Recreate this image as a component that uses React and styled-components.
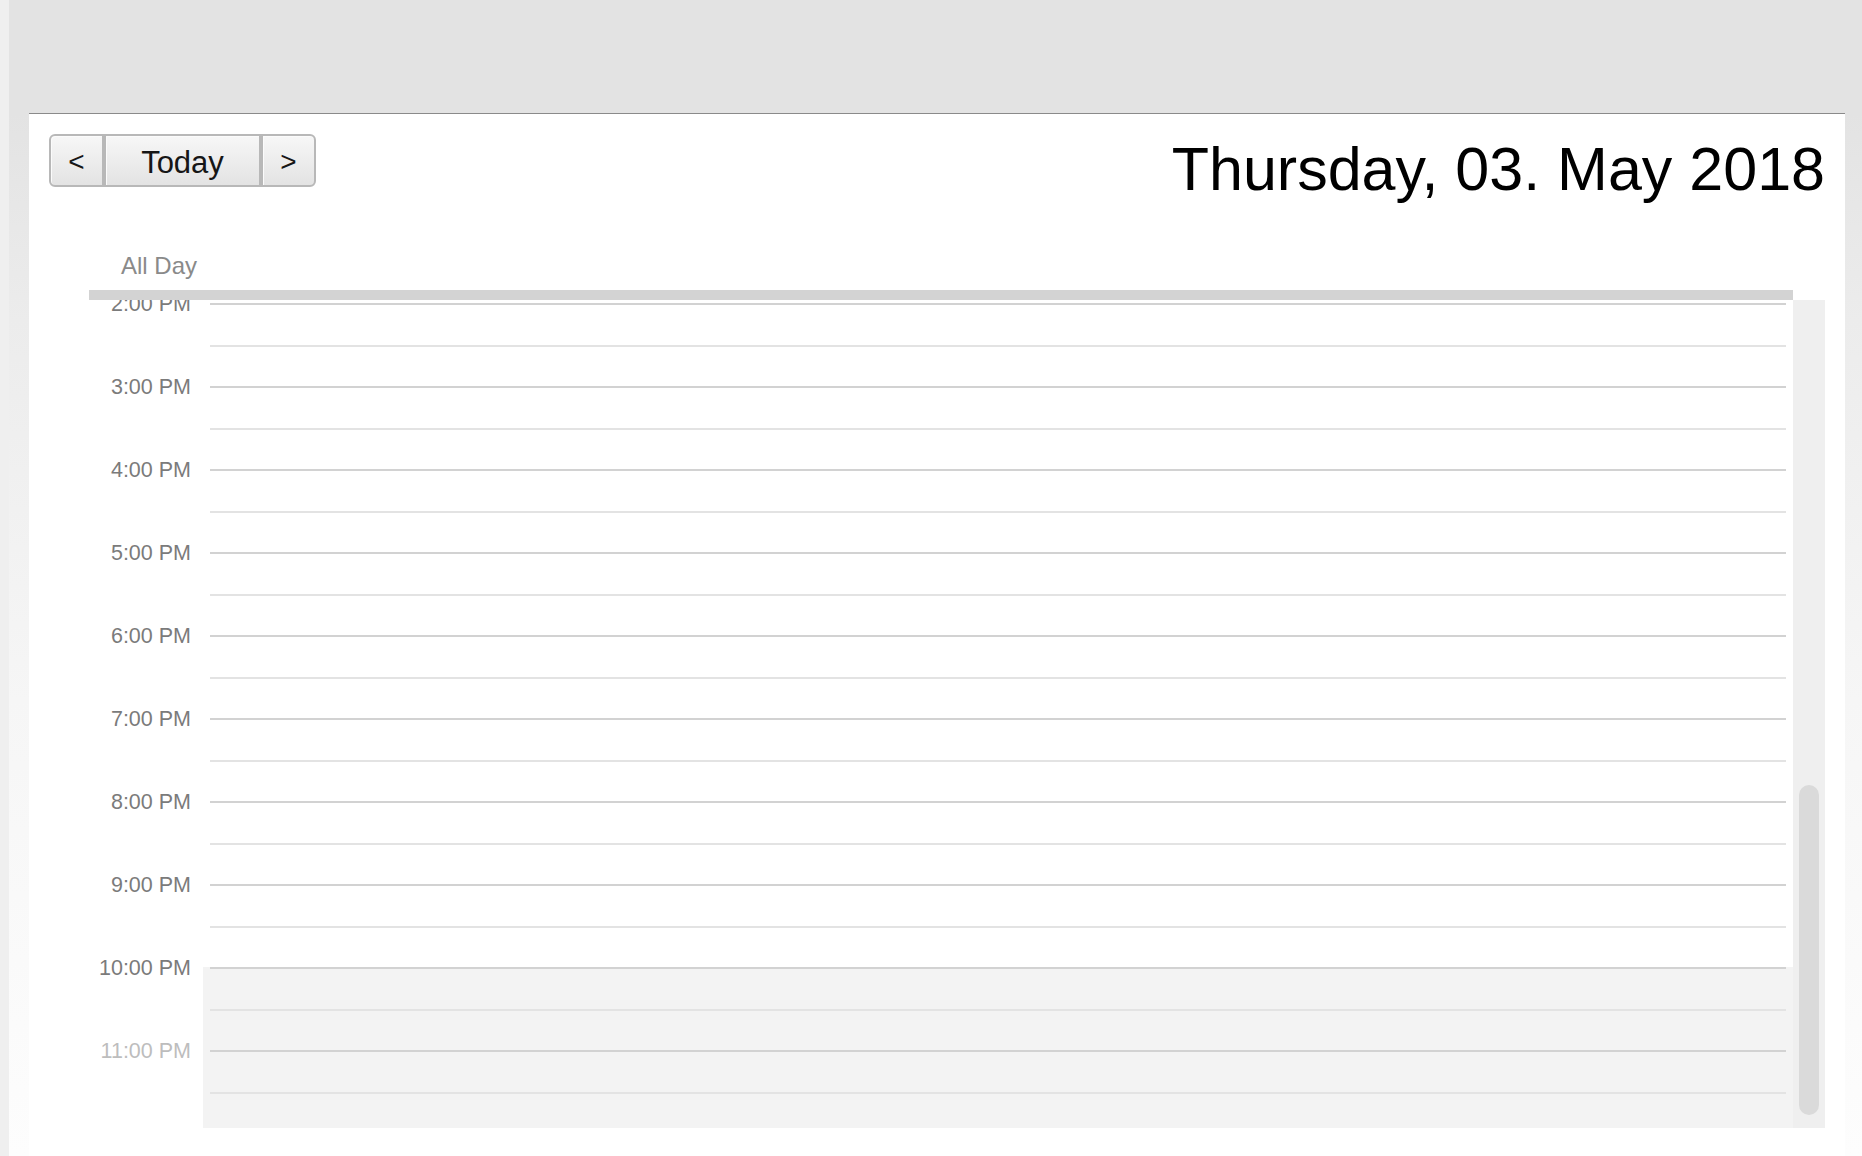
import React, { useLayoutEffect, useRef } from "react";
import styled, { createGlobalStyle } from "styled-components";

const HOUR = 83;
const VIEW_H = 828;
const SCROLL_TOP = 1159;
const THUMB_H = 330;

const Global = createGlobalStyle`
  *, *::before, *::after { box-sizing: border-box; }
  html, body { margin: 0; padding: 0; }
  body {
    font-family: "Liberation Sans", Arial, sans-serif;
    background: #efefef;
    overflow: hidden;
  }
`;

const Screen = styled.div`
  display: flex;
  width: 1862px;
  height: 1156px;
  overflow: hidden;
`;

const LeftStrip = styled.div`
  width: 9px;
  flex: none;
  background: #efefef;
`;

const Stage = styled.div`
  flex: 1;
  padding: 113px 17px 0 20px;
  background: linear-gradient(
    to bottom,
    #e3e3e3 0px,
    #e3e3e3 113px,
    #ececec 320px,
    #f6f6f6 700px,
    #fdfdfd 100%
  );
`;

const Panel = styled.div`
  background: #ffffff;
  border-top: 1px solid #8a8a8a;
  height: 1100px;
  display: flex;
  flex-direction: column;
`;

const Header = styled.div`
  display: flex;
  justify-content: space-between;
  align-items: flex-start;
  height: 73px;
  padding: 20px 20px 0 20px;
`;

const ButtonGroup = styled.div`
  display: flex;
  height: 53px;
`;

const NavButton = styled.button`
  width: ${(p) => p.$w}px;
  height: 53px;
  margin: 0;
  padding: 3px 0 0;
  font-family: "Liberation Sans", Arial, sans-serif;
  font-size: ${(p) => p.$fs}px;
  line-height: 1;
  color: #161616;
  background: linear-gradient(to bottom, #f7f7f7 0%, #ececec 55%, #e3e3e3 100%);
  border: 2px solid #b8b8b8;
  box-shadow: inset 1px 1px 0 #fbfbfb;
  border-radius: ${(p) =>
    p.$pos === "first" ? "6px 0 0 6px" : p.$pos === "last" ? "0 6px 6px 0" : "0"};
  display: flex;
  align-items: center;
  justify-content: center;
`;

const DateTitle = styled.div`
  margin-top: 5px;
  font-family: "Liberation Sans", Arial, sans-serif;
  font-size: 61px;
  line-height: 61px;
  color: #000;
  white-space: nowrap;
`;

const AllDayRow = styled.div`
  display: flex;
  align-items: flex-end;
  height: 103px;
  padding-left: 60px;
`;

const AllDayLabel = styled.div`
  width: 114px;
  text-align: right;
  padding-right: 6px;
  margin-bottom: 12px;
  font-size: 24px;
  line-height: 24px;
  color: #8a8a8a;
`;

const SeparatorBar = styled.div`
  height: 10px;
  margin: 0 52px 0 60px;
  background: #d3d3d3;
`;

const Body = styled.div`
  display: flex;
  height: ${VIEW_H}px;
  margin: 0 20px 0 60px;
`;

const Viewport = styled.div`
  flex: 1;
  height: 100%;
  overflow: hidden;
`;

const HourRow = styled.div`
  display: grid;
  grid-template-columns: 114px 1fr;
  height: ${HOUR}px;
`;

const LabelCell = styled.div`
  padding-right: 12px;
  text-align: right;
`;

const HourLabel = styled.div`
  transform: translateY(calc(-50% + 1px));
  font-size: 21.5px;
  line-height: 22px;
  white-space: nowrap;
  color: ${(p) => (p.$dim ? "#bdbdbd" : "#7b7b7b")};
`;

const Slot = styled.div`
  background: ${(p) => (p.$off ? "#f3f3f3" : "#ffffff")};
  padding: 0 7px;
  display: flex;
  flex-direction: column;
`;

const SlotLine = styled.div`
  flex: 1;
  border-top: 2px solid ${(p) => (p.$half ? "#e3e3e3" : "#d2d2d2")};
`;

const Track = styled.div`
  width: 32px;
  flex: none;
  height: 100%;
  background: #efefef;
  padding: 0 6px;
`;

const Thumb = styled.div`
  width: 20px;
  height: ${THUMB_H}px;
  border-radius: 10px;
  background: #dadada;
`;

const hourText = (h) => `${h % 12 === 0 ? 12 : h % 12}:00 ${h < 12 ? "AM" : "PM"}`;

export default function App() {
  const viewRef = useRef(null);
  const hours = Array.from({ length: 24 }, (_, i) => i);

  useLayoutEffect(() => {
    if (viewRef.current) viewRef.current.scrollTop = SCROLL_TOP;
  }, []);

  const maxScroll = hours.length * HOUR - VIEW_H;
  const thumbTop = 1 + (SCROLL_TOP / maxScroll) * (VIEW_H - 12 - THUMB_H);

  return (
    <>
      <Global />
      <Screen>
        <LeftStrip />
        <Stage>
          <Panel>
            <Header>
              <ButtonGroup>
                <NavButton $w={55} $fs={28} $pos="first">&lt;</NavButton>
                <NavButton $w={157} $fs={31}>Today</NavButton>
                <NavButton $w={55} $fs={28} $pos="last">&gt;</NavButton>
              </ButtonGroup>
              <DateTitle>Thursday, 03. May 2018</DateTitle>
            </Header>
            <AllDayRow>
              <AllDayLabel>All Day</AllDayLabel>
            </AllDayRow>
            <SeparatorBar />
            <Body>
              <Viewport ref={viewRef}>
                {hours.map((h) => (
                  <HourRow key={h}>
                    <LabelCell>
                      <HourLabel $dim={h === 23 || h < 7}>{hourText(h)}</HourLabel>
                    </LabelCell>
                    <Slot $off={h < 8 || h >= 22}>
                      <SlotLine />
                      <SlotLine $half />
                    </Slot>
                  </HourRow>
                ))}
              </Viewport>
              <Track>
                <Thumb style={{ marginTop: `${thumbTop}px` }} />
              </Track>
            </Body>
          </Panel>
        </Stage>
      </Screen>
    </>
  );
}
